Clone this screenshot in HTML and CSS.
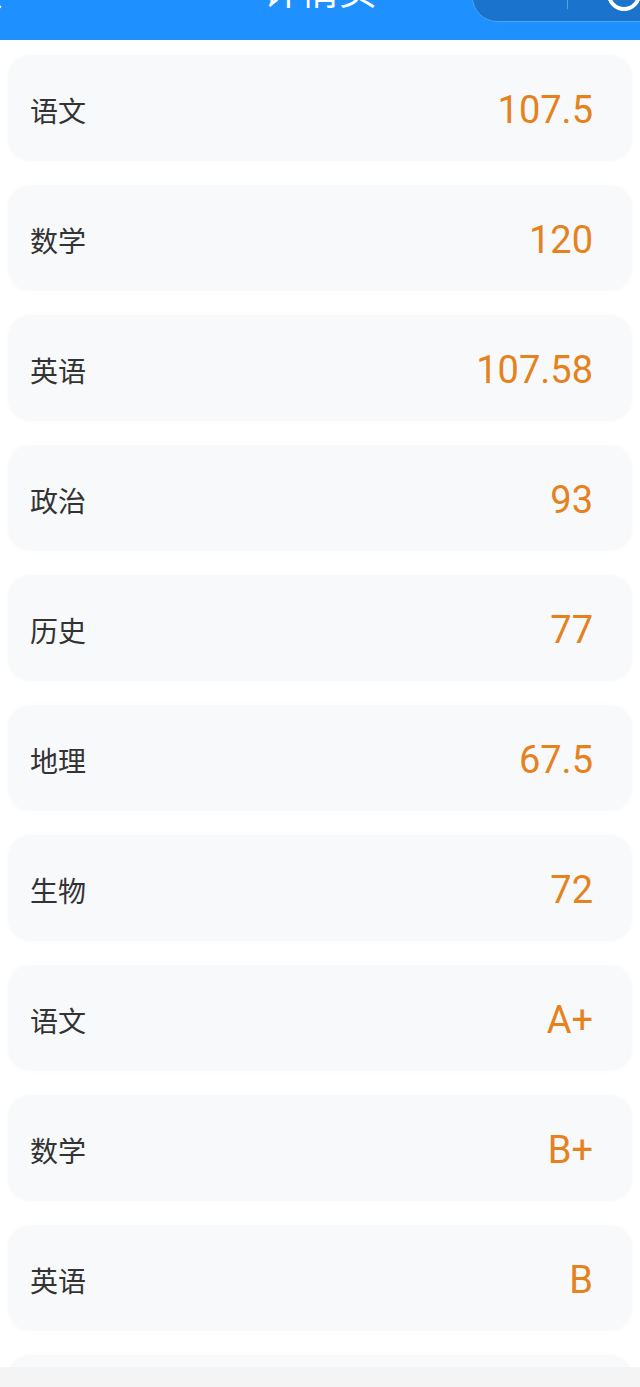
FILE: index.html
```html
<!DOCTYPE html>
<html lang="zh-CN">
<head>
    <meta charset="UTF-8">
    <meta name="viewport" content="width=device-width, initial-scale=1.0">
    <title>详情页</title>
    <link rel="stylesheet" href="styles.css">
</head>
<body>

    <!-- Navigation bar -->
    <div class="nav-bar">
        <span class="nav-back"></span>
        <span class="nav-title">详情页</span>
        <div class="capsule">
            <span class="capsule-divider"></span>
            <span class="capsule-circle"></span>
        </div>
    </div>

    <!-- Score list -->
    <div class="score-list">
        <div class="score-card"><span class="subject">语文</span><span class="score">107.5</span></div>
        <div class="score-card"><span class="subject">数学</span><span class="score">120</span></div>
        <div class="score-card"><span class="subject">英语</span><span class="score">107.58</span></div>
        <div class="score-card"><span class="subject">政治</span><span class="score">93</span></div>
        <div class="score-card"><span class="subject">历史</span><span class="score">77</span></div>
        <div class="score-card"><span class="subject">地理</span><span class="score">67.5</span></div>
        <div class="score-card"><span class="subject">生物</span><span class="score">72</span></div>
        <div class="score-card"><span class="subject">语文</span><span class="score">A+</span></div>
        <div class="score-card"><span class="subject">数学</span><span class="score">B+</span></div>
        <div class="score-card"><span class="subject">英语</span><span class="score">B</span></div>
        <div class="score-card"><span class="subject"></span><span class="score"></span></div>
    </div>

    <div class="bottom-bar"></div>

</body>
</html>
```

FILE: styles.css
```css
body {
    margin: 0;
    background-color: #ffffff;
    font-family: Roboto, "Noto Sans CJK SC", sans-serif;
    height: 1387px;
    overflow: hidden;
}

.nav-bar {
    position: relative;
    height: 40px;
    background-color: #1e90ff;
    overflow: hidden;
}

.nav-back {
    position: absolute;
    left: -10px;
    top: -14px;
    width: 16px;
    height: 16px;
    border-left: 3px solid #ffffff;
    border-bottom: 3px solid #ffffff;
    transform: rotate(45deg);
}

.nav-title {
    position: absolute;
    left: 0;
    right: 0;
    top: -31px;
    text-align: center;
    font-family: "Noto Sans CJK SC", sans-serif;
    font-size: 38px;
    color: #ffffff;
    line-height: 1;
}

.capsule {
    position: absolute;
    left: 472px;
    top: -30px;
    width: 220px;
    height: 50px;
    border-radius: 25px;
    background-color: #1a73cc;
    border: 1px solid #4fa3f0;
}

.capsule-divider {
    position: absolute;
    left: 94px;
    top: 26px;
    width: 1px;
    height: 12px;
    background-color: #5d9fdc;
}

.capsule-circle {
    position: absolute;
    left: 134px;
    top: 6px;
    width: 26px;
    height: 26px;
    border: 4px solid #ffffff;
    border-radius: 50%;
}

.score-list {
    display: flex;
    flex-direction: column;
    gap: 24px;
    padding: 15px 8px 0;
}

.score-card {
    display: flex;
    justify-content: space-between;
    align-items: center;
    height: 106px;
    padding: 4px 39px 0 22px;
    box-sizing: border-box;
    flex-shrink: 0;
    background-color: #f8f9fb;
    border-radius: 22px;
    box-shadow: 0 0 6px rgba(0, 0, 0, 0.02);
}

.subject {
    font-family: "Noto Sans CJK SC", sans-serif;
    font-size: 28px;
    color: #333333;
}

.score {
    font-size: 38px;
    color: #e5821e;
}

.bottom-bar {
    position: fixed;
    left: 0;
    right: 0;
    bottom: 0;
    height: 20px;
    background-color: #f4f4f5;
}
```
